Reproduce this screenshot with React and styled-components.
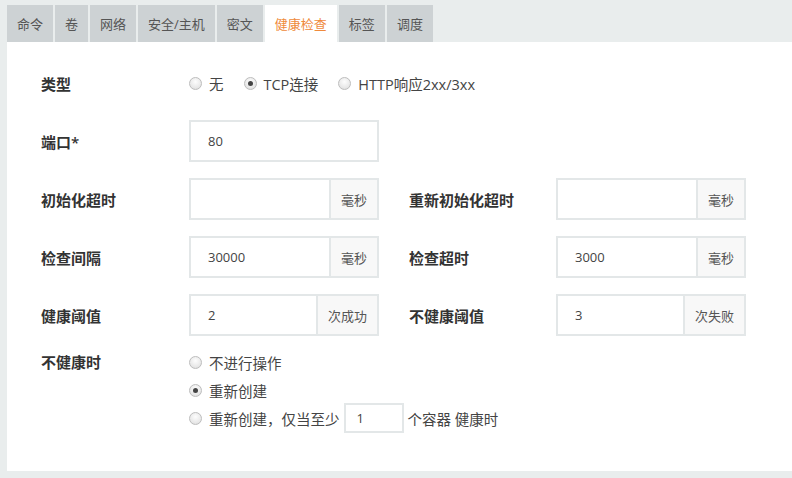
import React from "react";
import styled, { createGlobalStyle } from "styled-components";

const GlobalStyle = createGlobalStyle`
  html, body {
    margin: 0;
    padding: 0;
    background: #e9eded;
  }
  body {
    font-family: "Open Sans", "Noto Sans CJK SC", sans-serif;
    color: #333;
  }
  * {
    box-sizing: border-box;
  }
`;

const tabs = ["命令", "卷", "网络", "安全/主机", "密文", "健康检查", "标签", "调度"];

const App = () => {
  return (
    <>
      <GlobalStyle />
      <Page>
        <TabBar>
          {tabs.map((tab) => (
            <Tab key={tab} active={tab === "健康检查"}>
              {tab}
            </Tab>
          ))}
        </TabBar>
        <Panel>
          <TypeRow>
            <Label>类型</Label>
            <RadioGroup>
              <Radio label="无" />
              <Radio label="TCP连接" checked />
              <Radio label="HTTP响应2xx/3xx" />
            </RadioGroup>
          </TypeRow>

          <Row>
            <Field>
              <Label>端口*</Label>
              <InputGroup>
                <Input>80</Input>
              </InputGroup>
            </Field>
          </Row>

          <Row>
            <Field>
              <Label>初始化超时</Label>
              <InputGroup>
                <Input />
                <Addon>毫秒</Addon>
              </InputGroup>
            </Field>
            <Field>
              <Label narrow>重新初始化超时</Label>
              <InputGroup>
                <Input />
                <Addon>毫秒</Addon>
              </InputGroup>
            </Field>
          </Row>

          <Row>
            <Field>
              <Label>检查间隔</Label>
              <InputGroup>
                <Input>30000</Input>
                <Addon>毫秒</Addon>
              </InputGroup>
            </Field>
            <Field>
              <Label narrow>检查超时</Label>
              <InputGroup>
                <Input>3000</Input>
                <Addon>毫秒</Addon>
              </InputGroup>
            </Field>
          </Row>

          <Row>
            <Field>
              <Label>健康阈值</Label>
              <InputGroup>
                <Input>2</Input>
                <Addon>次成功</Addon>
              </InputGroup>
            </Field>
            <Field>
              <Label narrow>不健康阈值</Label>
              <InputGroup>
                <Input>3</Input>
                <Addon>次失败</Addon>
              </InputGroup>
            </Field>
          </Row>

          <ActionSection>
            <SectionLabel>不健康时</SectionLabel>
            <OptionList>
              <OptionLine>
                <Radio label="不进行操作" />
              </OptionLine>
              <OptionLine>
                <Radio label="重新创建" checked />
              </OptionLine>
              <OptionLine>
                <Radio label="重新创建，仅当至少" />
                <SmallInput>1</SmallInput>
                <span>个容器 健康时</span>
              </OptionLine>
            </OptionList>
          </ActionSection>
        </Panel>
      </Page>
    </>
  );
};

const Radio = ({ label, checked }) => (
  <RadioLabel>
    <RadioDot checked={checked} />
    <span>{label}</span>
  </RadioLabel>
);

const Page = styled.div`
  height: 478px;
  padding: 5px 0 7px 7px;
  display: flex;
  flex-direction: column;
`;

const TabBar = styled.div`
  display: flex;
  gap: 2px;
  height: 37px;
  flex-shrink: 0;
`;

const Tab = styled.div`
  display: flex;
  align-items: center;
  padding: 0 10px;
  font-size: 13px;
  background: ${(p) => (p.active ? "#fff" : "#cdd2d4")};
  color: ${(p) => (p.active ? "#ef8a3c" : "#555")};
`;

const Panel = styled.div`
  flex: 1;
  background: #fff;
  padding: 20px 0 0 34px;
`;

const Label = styled.div`
  width: ${(p) => (p.narrow ? "147px" : "148px")};
  flex-shrink: 0;
  font-size: 15px;
  font-weight: 600;
  color: #333;
`;

const SectionLabel = styled(Label)`
  line-height: 28px;
`;

const TypeRow = styled.div`
  display: flex;
  align-items: center;
  height: 42px;
  margin-bottom: 16px;
`;

const RadioGroup = styled.div`
  display: flex;
  align-items: center;
  gap: 20px;
`;

const RadioLabel = styled.label`
  display: inline-flex;
  align-items: center;
  gap: 7px;
  font-size: 14.5px;
  color: #444;
`;

const RadioDot = styled.span`
  width: 13px;
  height: 13px;
  border-radius: 50%;
  border: 1px solid #bdbdbd;
  background: radial-gradient(circle at 50% 35%, #fdfdfd 0%, #e6e6e6 70%, #d4d4d4 100%);
  position: relative;
  flex-shrink: 0;
  &::after {
    content: "";
    display: ${(p) => (p.checked ? "block" : "none")};
    position: absolute;
    top: 3px;
    left: 3px;
    width: 5px;
    height: 5px;
    border-radius: 50%;
    background: #444;
  }
`;

const Row = styled.div`
  display: flex;
  gap: 30px;
  margin-bottom: 16px;
`;

const Field = styled.div`
  display: flex;
  align-items: center;
`;

const InputGroup = styled.div`
  display: flex;
  width: 190px;
  height: 42px;
  border: 2px solid #e3e7e8;
`;

const Input = styled.div`
  flex: 1;
  display: flex;
  align-items: center;
  padding-left: 17px;
  font-size: 13px;
  color: #444;
`;

const Addon = styled.div`
  display: flex;
  align-items: center;
  padding: 0 10px;
  border-left: 2px solid #e3e7e8;
  background: #f8f8f8;
  font-size: 13px;
  color: #555;
`;

const ActionSection = styled.div`
  display: flex;
  align-items: flex-start;
  margin-top: -4px;
`;

const OptionList = styled.div`
  display: flex;
  flex-direction: column;
`;

const OptionLine = styled.div`
  display: flex;
  align-items: center;
  gap: 4px;
  height: 28px;
  font-size: 14.5px;
  color: #444;
`;

const SmallInput = styled.div`
  width: 60px;
  height: 30px;
  border: 2px solid #e3e7e8;
  display: flex;
  align-items: center;
  padding-left: 11px;
  font-size: 13px;
  color: #444;
`;

export default App;
